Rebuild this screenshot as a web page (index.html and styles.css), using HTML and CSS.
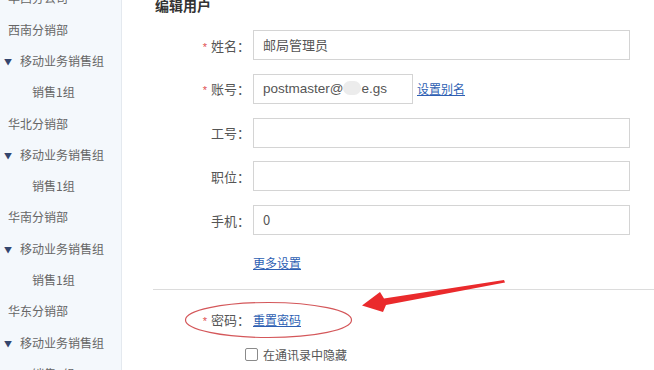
FILE: index.html
```html
<!DOCTYPE html>
<html lang="zh">
<head>
<meta charset="utf-8">
<title>编辑用户</title>
<link rel="stylesheet" href="styles.css">
</head>
<body>
<div class="page">
  <aside class="sidebar">
    <ul class="tree">
      <li class="dept">华西分公司</li>
      <li class="dept">西南分销部</li>
      <li class="group"><span class="caret">▼</span>移动业务销售组</li>
      <li class="team">销售1组</li>
      <li class="dept">华北分销部</li>
      <li class="group"><span class="caret">▼</span>移动业务销售组</li>
      <li class="team">销售1组</li>
      <li class="dept">华南分销部</li>
      <li class="group"><span class="caret">▼</span>移动业务销售组</li>
      <li class="team">销售1组</li>
      <li class="dept">华东分销部</li>
      <li class="group"><span class="caret">▼</span>移动业务销售组</li>
      <li class="team">销售1组</li>
    </ul>
  </aside>
  <main class="main">
    <h2 class="title">编辑用户</h2>
    <div class="form">
      <div class="row">
        <label class="label"><span class="req">*</span>姓名：</label>
        <div class="field"><div class="input">邮局管理员</div></div>
      </div>
      <div class="row">
        <label class="label"><span class="req">*</span>账号：</label>
        <div class="field">
          <div class="input short">postmaster@<span class="blur"></span>e.gs</div>
          <a class="link" href="#">设置别名</a>
        </div>
      </div>
      <div class="row">
        <label class="label">工号：</label>
        <div class="field"><div class="input"></div></div>
      </div>
      <div class="row">
        <label class="label">职位：</label>
        <div class="field"><div class="input"></div></div>
      </div>
      <div class="row">
        <label class="label">手机：</label>
        <div class="field"><div class="input">0</div></div>
      </div>
      <div class="row more">
        <span class="label"></span>
        <div class="field"><a class="link" href="#">更多设置</a></div>
      </div>
    </div>
    <hr class="divider">
    <div class="row pw">
      <label class="label"><span class="req">*</span>密码：</label>
      <div class="field"><a class="link" href="#">重置密码</a></div>
    </div>
    <div class="row hide">
      <span class="label"><span class="checkbox"></span></span>
      <div class="field"><span class="check-text">在通讯录中隐藏</span></div>
    </div>
  </main>
  <svg class="annot" width="654" height="370" viewBox="0 0 654 370">
    <ellipse cx="268.5" cy="320" rx="83" ry="17.5" fill="none" stroke="#d4575a" stroke-width="1.2"/>
    <polygon points="504,280 384,298.5 380,292 362,305.5 383,312 386,305 505,282.5" fill="#ea2a2c"/>
  </svg>
</div>
</body>
</html>
```
FILE: styles.css
```css
* { box-sizing: border-box; }
html, body { margin: 0; padding: 0; }
body {
  font-family: "Noto Sans CJK SC", "Liberation Sans", sans-serif;
  background: #fff;
  width: 654px;
  height: 370px;
  overflow: hidden;
}
.page {
  position: relative;
  display: flex;
  width: 654px;
  height: 370px;
  overflow: hidden;
}
.sidebar {
  width: 122px;
  flex: none;
  background: #f4f8fc;
  border-right: 1px solid #e4e9ef;
  overflow: hidden;
}
.tree {
  list-style: none;
  margin: -17.6px 0 0 0;
  padding: 0;
}
.tree li {
  height: 31.3px;
  line-height: 31.3px;
  font-size: 12px;
  color: #666;
  white-space: nowrap;
}
.dept { padding-left: 8px; }
.group { padding-left: 4px; }
.caret {
  display: inline-block;
  width: 16px;
  font-size: 8px;
  vertical-align: 1px;
  color: #34466e;
}
.team { padding-left: 32px; }

.main {
  flex: 1;
  padding-left: 31px;
  overflow: hidden;
}
.title {
  margin: -5px 0 0 0;
  padding-left: 2px;
  font-size: 14px;
  line-height: 20px;
  font-weight: bold;
  color: #333;
}
.form {
  display: flex;
  flex-direction: column;
  gap: 13.75px;
  margin-top: 15px;
}
.row {
  display: flex;
  align-items: center;
}
.label {
  width: 100px;
  flex: none;
  text-align: right;
  padding-right: 3px;
  font-size: 13px;
  color: #555;
  white-space: nowrap;
}
.req {
  color: #e05050;
  font-size: 11px;
  margin-right: 4px;
  font-family: "Liberation Sans", sans-serif;
}
.field {
  display: flex;
  align-items: center;
  gap: 4px;
}
.input {
  width: 377px;
  height: 30px;
  border: 1px solid #d4d4d4;
  background: #fff;
  padding-left: 9px;
  font-size: 13px;
  line-height: 28px;
  color: #555;
  white-space: nowrap;
}
.input.short { width: 160px; font-family: "Liberation Sans", sans-serif; font-size: 13.5px; }
.blur {
  display: inline-block;
  width: 18px;
  height: 14px;
  vertical-align: -2px;
  border-radius: 7px;
  background: #ececec;
}
.link {
  font-size: 12px;
  color: #2e5fb3;
  text-decoration: underline;
  line-height: 16px;
}
.more { margin-top: 6px; }
.divider {
  border: none;
  border-top: 1px solid #dcdcdc;
  margin: 18px 0 0 0;
}
.pw { margin-top: 21px; height: 18px; }
.hide { margin-top: 17px; }
.hide .label { display: flex; justify-content: flex-end; padding-right: 0; }
.checkbox {
  display: inline-block;
  width: 13px;
  height: 13px;
  border: 1px solid #8a8a8a;
  border-radius: 2px;
  background: #fff;
  margin-right: -5px;
}
.hide .field { padding-left: 10px; }
.check-text { font-size: 12px; color: #555; }
.annot {
  position: absolute;
  left: 0;
  top: 0;
  pointer-events: none;
}
```
